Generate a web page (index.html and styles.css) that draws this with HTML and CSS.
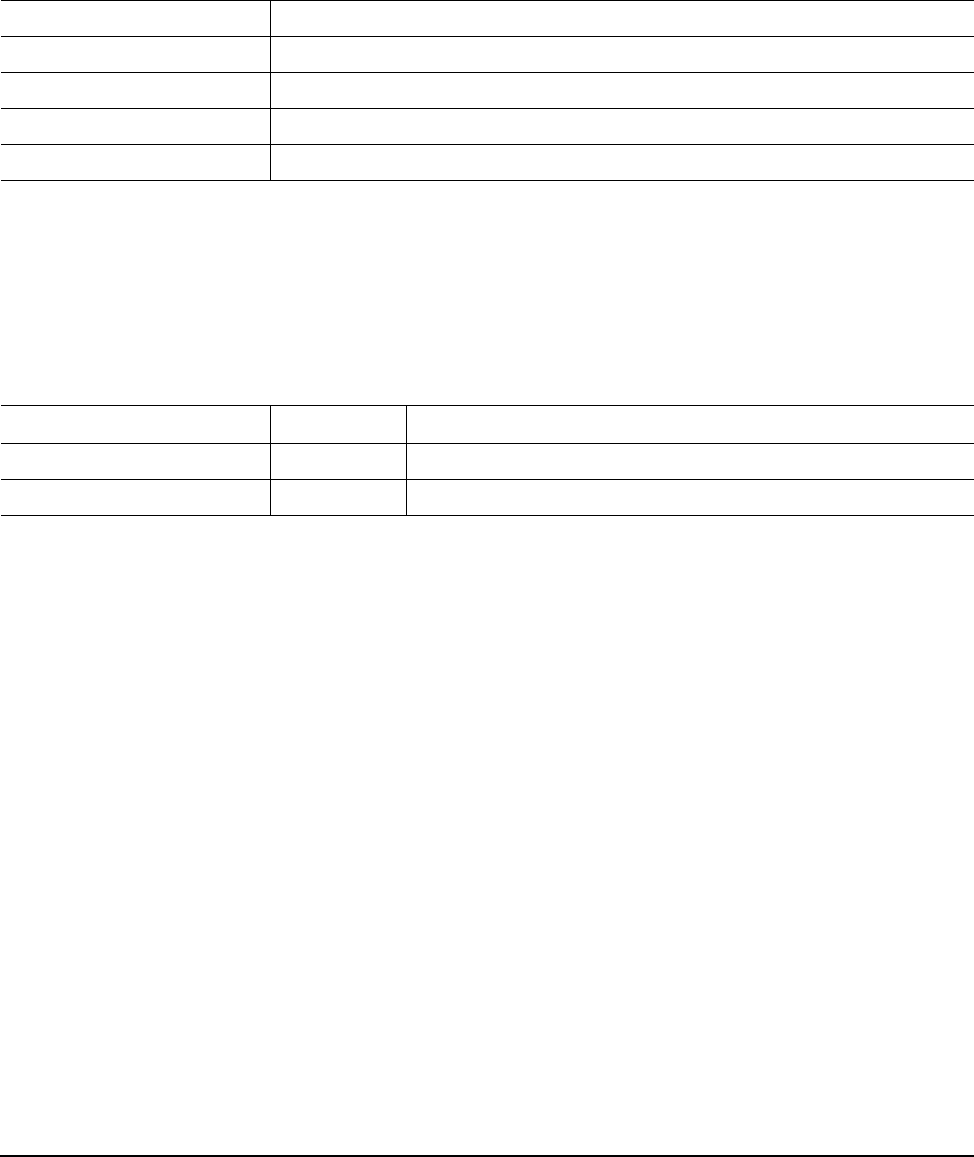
FILE: index.html
```html
<!DOCTYPE html>
<html lang="en">
<head>
  <meta charset="UTF-8" />
  <meta name="viewport" content="width=device-width, initial-scale=1.0" />
  <title>Blank Form</title>
  <link rel="stylesheet" href="styles.css">
</head>
<body>
  <!-- first block: two columns -->
  <table class="grid grid-top">
    <colgroup>
      <col class="col-label" />
      <col />
    </colgroup>
    <tr><td></td><td></td></tr>
    <tr><td></td><td></td></tr>
    <tr><td></td><td></td></tr>
    <tr><td></td><td></td></tr>
    <tr><td></td><td></td></tr>
  </table>

  <!-- second block: three columns -->
  <table class="grid grid-bottom">
    <colgroup>
      <col class="col-label" />
      <col class="col-mid" />
      <col />
    </colgroup>
    <tr class="head-row"><td></td><td></td><td></td></tr>
    <tr><td></td><td></td><td></td></tr>
    <tr><td></td><td></td><td></td></tr>
  </table>

  <div class="footer-line"></div>
</body>
</html>
```

FILE: styles.css
```css
body {
  margin: 0;
  font-family: 'Liberation Sans', Arial, sans-serif;
  background: #fff;
  color: #000;
  min-height: 1157px;
  display: flex;
  flex-direction: column;
}

.grid {
  border-collapse: collapse;
  table-layout: fixed;
  width: calc(100% - 1px);
  margin-left: 1px;
}
.grid td {
  height: 35px;
  padding: 0;
  border-bottom: 1px solid #000;
  border-left: 1px solid #000;
}
.grid td:first-child {
  border-left: none;
}
.grid .head-row td {
  height: 37px;
}

.grid-top {
  border-top: 1px solid #000;
}
.grid-bottom {
  margin-top: 224px;
  border-top: 1px solid #000;
}

.col-label {
  width: 269px;
}
.col-mid {
  width: 136px;
}

.footer-line {
  margin-top: auto;
  height: 2px;
  background: #000;
}
```
